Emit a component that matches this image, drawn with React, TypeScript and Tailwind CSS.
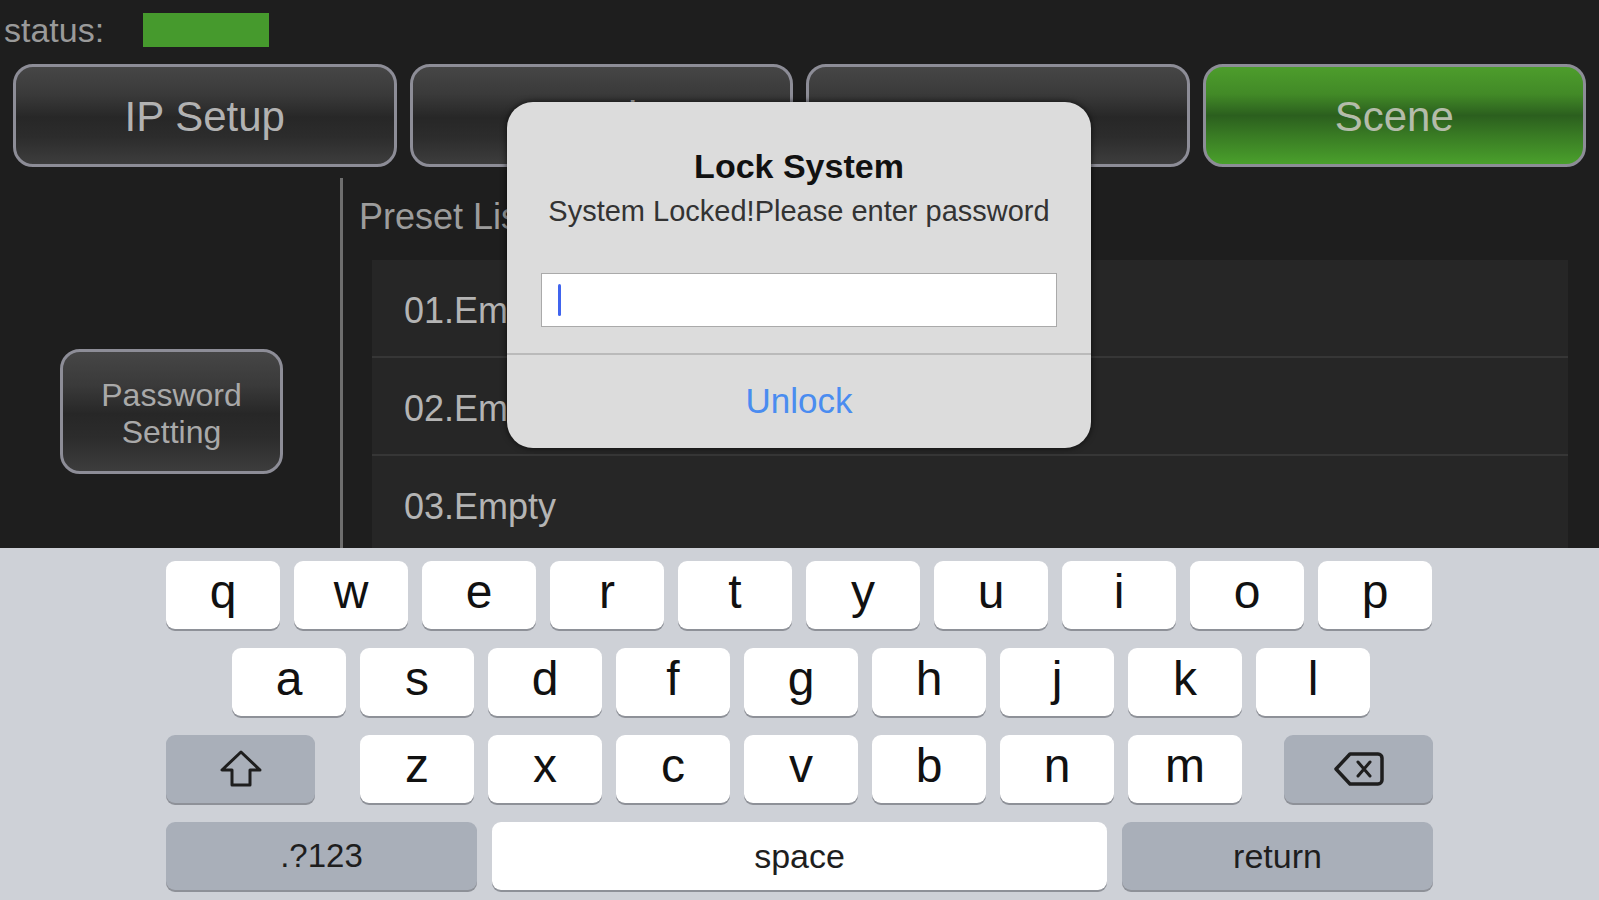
import React from "react";

const rowOne = ["q", "w", "e", "r", "t", "y", "u", "i", "o", "p"];
const rowTwo = ["a", "s", "d", "f", "g", "h", "j", "k", "l"];
const rowThree = ["z", "x", "c", "v", "b", "n", "m"];
const presets = ["01.Empty", "02.Empty", "03.Empty"];

const darkBtn =
	"rounded-[20px] border-[3px] border-[#8d8d97] bg-[linear-gradient(to_bottom,#464646_0%,#3a3a3a_28%,#272727_52%,#2c2c2c_72%,#3d3d3d_100%)]";

function TabButton({ label, active }: { label: string; active?: boolean }) {
	return (
		<div
			className={
				active
					? "flex-1 flex items-center justify-center pt-[2px] rounded-[20px] border-[3px] border-[#8d8d97] bg-[linear-gradient(to_bottom,#4d9d2c_0%,#428a27_28%,#2b5f1e_50%,#3a7d24_72%,#4aa02c_100%)] text-[42px] text-[#b4bcaa]"
					: `flex-1 flex items-center justify-center pt-[2px] ${darkBtn} text-[42px] text-[#b2b2b2]`
			}
		>
			{label}
		</div>
	);
}

function Key({ label }: { label: string }) {
	return (
		<div className="w-[114px] h-[68px] rounded-[9px] bg-white shadow-[0_2px_0_#8e9198] flex items-center justify-center pb-[7px] text-[48px] text-[#111]">
			{label}
		</div>
	);
}

function ShiftIcon() {
	return (
		<svg width="44" height="40" viewBox="0 0 44 40" fill="none">
			<path d="M22 3 L3 21 H13 V36 H31 V21 H41 Z" stroke="#1e1e1e" strokeWidth="3" strokeLinejoin="round" />
		</svg>
	);
}

function BackspaceIcon() {
	return (
		<svg width="52" height="36" viewBox="0 0 52 36" fill="none">
			<path
				d="M17 3 H45 a4 4 0 0 1 4 4 V29 a4 4 0 0 1 -4 4 H17 L3 18 Z"
				stroke="#1e1e1e"
				strokeWidth="3.5"
				strokeLinejoin="round"
			/>
			<path d="M25 11 L37 25 M37 11 L25 25" stroke="#1e1e1e" strokeWidth="3" strokeLinecap="round" />
		</svg>
	);
}

function Keyboard() {
	return (
		<div className="h-[352px] bg-[#ced1d7] pt-[13px] flex flex-col gap-[19px] font-['Liberation_Sans',Arial,sans-serif]">
			<div className="flex gap-[14px] ml-[166px]">
				{rowOne.map((k) => (
					<Key key={k} label={k} />
				))}
			</div>
			<div className="flex gap-[14px] ml-[232px]">
				{rowTwo.map((k) => (
					<Key key={k} label={k} />
				))}
			</div>
			<div className="flex ml-[166px]">
				<div className="w-[149px] h-[68px] rounded-[9px] bg-[#a9afb9] shadow-[0_2px_0_#8e9198] flex items-center justify-center">
					<ShiftIcon />
				</div>
				<div className="flex gap-[14px] ml-[45px]">
					{rowThree.map((k) => (
						<Key key={k} label={k} />
					))}
				</div>
				<div className="ml-[42px] w-[149px] h-[68px] rounded-[9px] bg-[#a9afb9] shadow-[0_2px_0_#8e9198] flex items-center justify-center">
					<BackspaceIcon />
				</div>
			</div>
			<div className="flex gap-[15px] ml-[166px]">
				<div className="w-[311px] h-[68px] rounded-[9px] bg-[#a9afb9] shadow-[0_2px_0_#8e9198] flex items-center justify-center text-[33px] text-[#1e1e1e]">
					.?123
				</div>
				<div className="w-[615px] h-[68px] rounded-[9px] bg-white shadow-[0_2px_0_#8e9198] flex items-center justify-center text-[34px] text-[#1e1e1e]">
					space
				</div>
				<div className="w-[311px] h-[68px] rounded-[9px] bg-[#a9afb9] shadow-[0_2px_0_#8e9198] flex items-center justify-center text-[34px] text-[#1e1e1e]">
					return
				</div>
			</div>
		</div>
	);
}

function LockDialog() {
	return (
		<div className="absolute left-[507px] top-[102px] w-[584px] h-[346px] rounded-[26px] bg-[#dcdcdc] shadow-[0_0_6px_rgba(0,0,0,0.7)] flex flex-col font-['Liberation_Sans',Arial,sans-serif]">
			<div className="pt-[47px] text-center text-[34px] leading-[34px] font-bold text-[#111]">Lock System</div>
			<div className="mt-[14px] text-center text-[29px] leading-[29px] text-[#333]">
				System Locked!Please enter password
			</div>
			<div className="mt-[47px] mx-[34px] h-[54px] bg-white border border-[#aaaaaa] flex items-center pl-[16px]">
				<div className="w-[3px] h-[32px] rounded-full bg-[#4064ee]"></div>
			</div>
			<div className="mt-[26px] h-[2px] bg-[#bababa]"></div>
			<div className="flex-1 flex items-center justify-center text-[35px] text-[#4a8cf0]">Unlock</div>
		</div>
	);
}

export default function App() {
	return (
		<div className="relative w-[1599px] h-[900px] overflow-hidden bg-[#1e1e1e] flex flex-col font-['Liberation_Sans',Arial,sans-serif]">
			{/* status */}
			<div className="h-[64px] flex items-start pt-[13px] pl-[4px]">
				<span className="w-[139px] text-[34px] leading-[34px] text-[#9a9a9a]">status:</span>
				<div className="w-[126px] h-[34px] bg-[#469a2d]"></div>
			</div>

			{/* tabs */}
			<div className="h-[103px] flex gap-[13px] px-[13px]">
				<TabButton label="IP Setup" />
				<TabButton label="Matrix" />
				<TabButton label="Preset" />
				<TabButton label="Scene" active />
			</div>

			{/* content */}
			<div className="h-[381px] flex">
				<div className="w-[340px] pt-[182px] pl-[60px]">
					<div className={`w-[223px] h-[125px] flex flex-col items-center justify-center pt-[4px] ${darkBtn} rounded-[16px] text-[32px] leading-[37px] text-[#a9a9a9]`}>
						<span>Password</span>
						<span>Setting</span>
					</div>
				</div>
				<div className="w-[3px] mt-[11px] bg-[#6e6e6e]"></div>
				<div className="flex-1 flex flex-col overflow-hidden">
					<div className="h-[93px] pl-[16px] pt-[32px] text-[36px] leading-none text-[#9c9c9c]">Preset List</div>
					<div className="flex-1 ml-[29px] mr-[31px] bg-[#262626] overflow-hidden">
						{presets.map((p, i) => (
							<div key={p}>
								<div className="h-[96px] flex items-center pl-[32px] pt-[6px] text-[36px] text-[#b4b4b4]">{p}</div>
								{i < presets.length - 1 && <div className="h-[2px] bg-[#363636]"></div>}
							</div>
						))}
					</div>
				</div>
			</div>

			<Keyboard />
			<LockDialog />
		</div>
	);
}
